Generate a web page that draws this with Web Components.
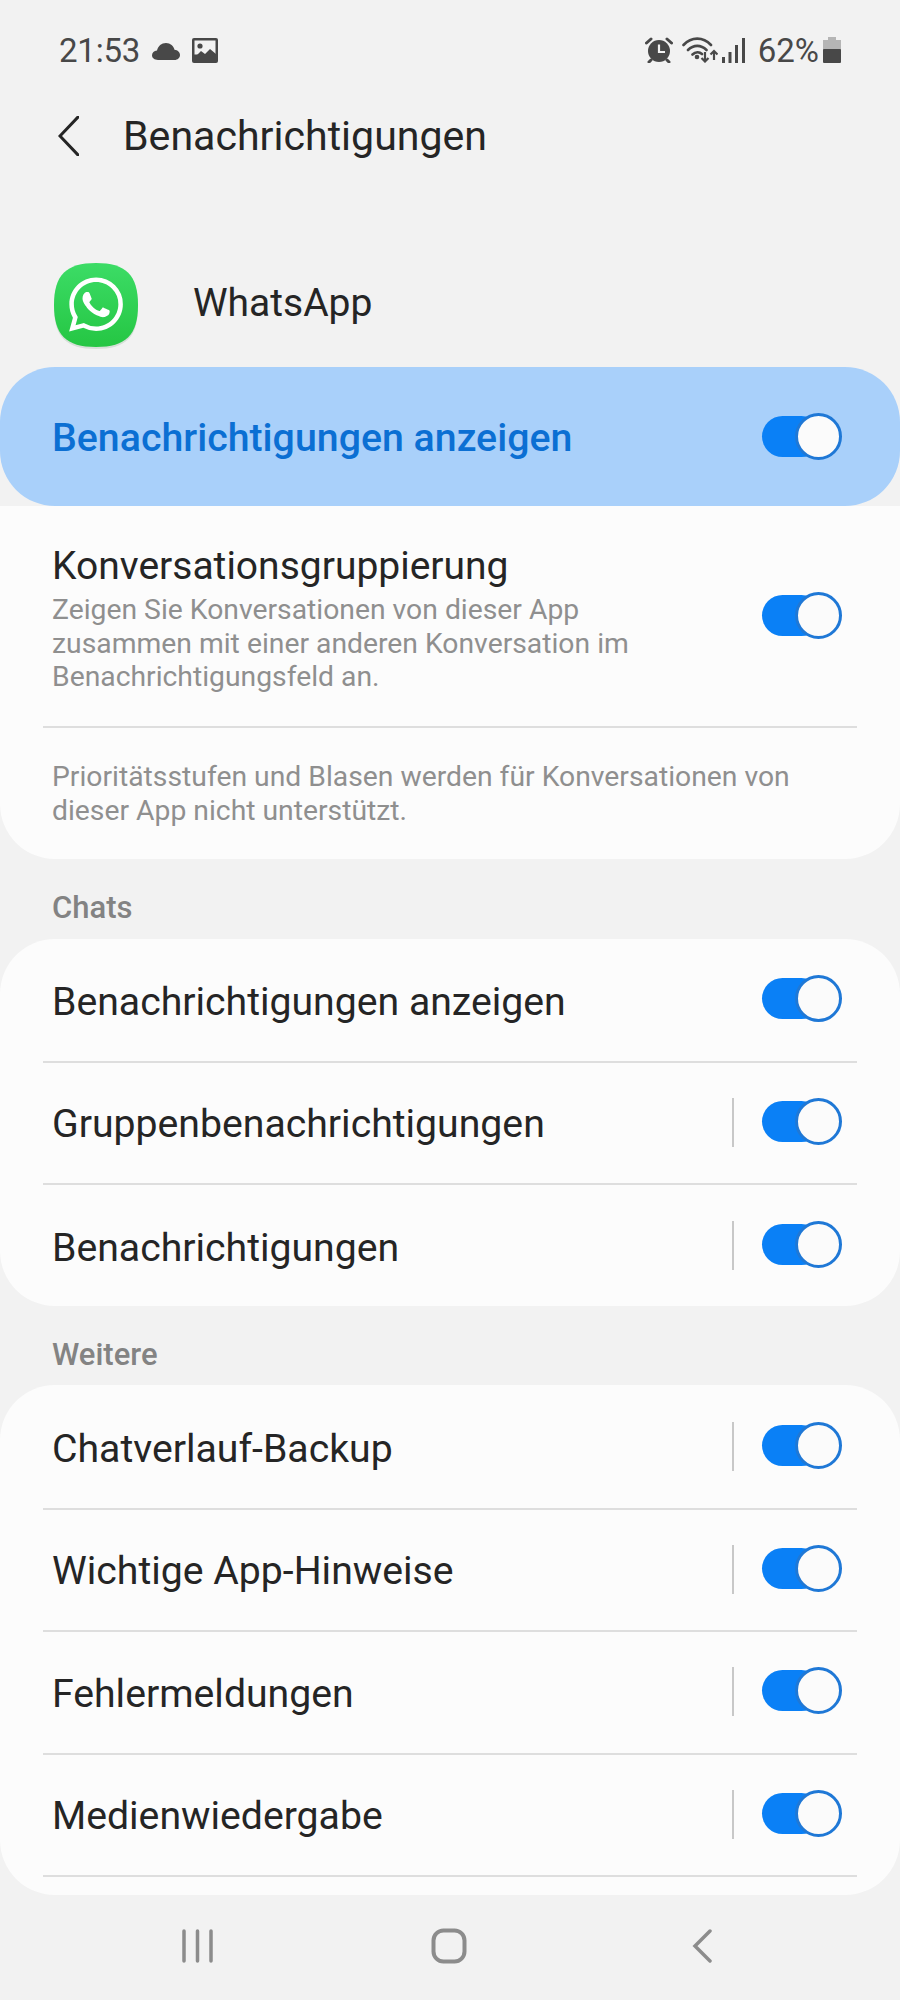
<!DOCTYPE html>
<html lang="de"><head><meta charset="utf-8"><title>Benachrichtigungen</title>
<style>
html,body{margin:0;padding:0}
body{width:900px;height:2000px;overflow:hidden;background:#f2f2f2;font-family:Roboto,"Liberation Sans",sans-serif;color:#252525;display:flex;flex-direction:column}
</style></head><body>
<status-bar></status-bar>
<app-bar>Benachrichtigungen</app-bar>
<app-head>WhatsApp</app-head>
<master-row>Benachrichtigungen anzeigen</master-row>
<set-card flat style="height:353px">
  <conv-row title="Konversationsgruppierung">Zeigen Sie Konversationen von dieser App<br>zusammen mit einer anderen Konversation im<br>Benachrichtigungsfeld an.</conv-row>
  <note-text>Prioritätsstufen und Blasen werden für Konversationen von<br>dieser App nicht unterstützt.</note-text>
</set-card>
<sec-label>Chats</sec-label>
<set-card style="height:367px;padding-top:1px">
  <set-row>Benachrichtigungen anzeigen</set-row>
  <set-row divider>Gruppenbenachrichtigungen</set-row>
  <set-row divider last>Benachrichtigungen</set-row>
</set-card>
<sec-label short>Weitere</sec-label>
<set-card style="height:510px;padding-top:2px">
  <set-row divider>Chatverlauf-Backup</set-row>
  <set-row divider>Wichtige App-Hinweise</set-row>
  <set-row divider>Fehlermeldungen</set-row>
  <set-row divider>Medienwiedergabe</set-row>
</set-card>
<nav-bar></nav-bar>
<script>
function def(name,html){
  customElements.define(name,class extends HTMLElement{
    connectedCallback(){
      if(this.shadowRoot)return;
      const r=this.attachShadow({mode:'open'});
      r.innerHTML=typeof html==='function'?html(this):html;
    }
  });
}
def('toggle-switch',`<style>
:host{display:block;position:relative;width:80px;height:47px;flex:none}
.t{position:absolute;left:0;top:3px;width:60px;height:41px;border-radius:21px;background:#0a80f6}
.k{position:absolute;right:0;top:0;width:47px;height:47px;box-sizing:border-box;border-radius:50%;background:#fbfbfb;border:3px solid #1f78d6}
</style><div class="t"></div><div class="k"></div>`);
def('status-bar',`<style>
:host{display:flex;align-items:center;height:100px;flex:none;box-sizing:border-box;padding:0 59px 0 59px;color:#484848;font-size:33px}
.time{width:93px;letter-spacing:-.2px}
svg{display:block;flex:none}
.sp{flex:1}
</style>
<span class="time">21:53</span>
<svg width="28" height="18" viewBox="0 0 28 18" style="margin-bottom:-1px"><path fill="#484848" d="M6 18C2.500 18 0 16 0 13.300c0-2.700 2-4.600 5-4.800C6 4 9.500 1 14 1c4.300 0 7.800 3 8.500 6.800 3.200.3 5.500 2.500 5.500 5.200 0 2.800-2.300 5-5.500 5z"/></svg>
<svg width="26" height="25" viewBox="0 0 26 25" style="margin-left:12px"><rect width="26" height="25" rx="2" fill="#484848"/><rect x="2.500" y="2.500" width="21" height="14" fill="#f2f2f2"/><circle cx="8" cy="8" r="2.600" fill="#484848"/><path fill="#484848" d="M2 20l7-7 4 3 5-5 6 5v8H2z"/></svg>
<span class="sp"></span>
<svg width="28" height="26" viewBox="0 0 28 26"><path stroke="#484848" stroke-width="3" stroke-linecap="round" d="M1.500 6L6 2M26.500 6L22 2M6 23l-2 2M22 23l2 2"/><circle cx="14" cy="14" r="11" fill="#484848"/><path d="M14 7.500V15h6" stroke="#f2f2f2" stroke-width="2.200" fill="none"/></svg>
<svg width="36" height="26" viewBox="0 0 36 26" style="margin-left:9px"><g fill="none" stroke="#484848" stroke-width="2.600" stroke-linecap="round"><path d="M1.500 8C9.500 -.5 21 -.5 29 8M6 13c5.500-5.500 13-5.500 18.500 0M10.500 17.500c3-2.800 7-2.800 9.500-.5"/></g><circle cx="15" cy="20" r="2.300" fill="#484848"/><path stroke="#484848" stroke-width="2.200" fill="none" d="M23 15v9M19.500 21l3.500 3.500 3.500-3.500M32 23v-9M28.500 17.500L32 14l3.500 3.500"/></svg>
<svg width="23" height="25" viewBox="0 0 23 25" style="margin-left:4px"><g fill="#484848"><rect x="0" y="19" width="3" height="6"/><rect x="6.500" y="14" width="3" height="11"/><rect x="13" y="7" width="3" height="18"/><rect x="20" y="0" width="3" height="25"/></g></svg>
<span style="margin-left:13px">62%</span>
<svg width="18" height="26" viewBox="0 0 18 26" style="margin-left:4px"><path fill="#b5b5b5" d="M5 0h8v3h5v10H0V3h5z"/><rect y="12" width="18" height="14" rx="1" fill="#484848"/></svg>`);
def('app-bar',`<style>
:host{display:flex;align-items:center;height:72px;flex:none;padding-left:58px;font-size:41.100px;color:#252525}
svg{margin-right:44px;flex:none}
</style><svg width="21" height="40" viewBox="0 0 21 40"><path d="M20 1L2 20l18 19" fill="none" stroke="#252525" stroke-width="3" stroke-linecap="round"/></svg><slot></slot>`);
def('app-head',`<style>
:host{display:flex;align-items:center;height:115px;margin-top:80px;box-sizing:border-box;padding-bottom:14px;flex:none;padding-left:54px;font-size:39px;color:#252525}
svg{margin-right:55px;margin-top:3px;margin-bottom:-3px;flex:none}
</style><svg width="84" height="86" viewBox="0 0 84 86"><defs><linearGradient id="g" x1="0" y1="0" x2="0" y2="1"><stop offset="0" stop-color="#3cdc66"/><stop offset="1" stop-color="#25c643"/></linearGradient></defs>
<path fill="#d6dfd8" d="M42 2C72 2 84 14 84 44S72 86 42 86 0 74 0 44 12 2 42 2z"/>
<path fill="url(#g)" d="M42 0C72 0 84 12 84 42S72 84 42 84 0 72 0 42 12 0 42 0z"/>
<g transform="translate(15 14.500) scale(2.250)"><path fill="#fff" d="M17.472 14.382c-.297-.149-1.758-.867-2.030-.967-.273-.099-.471-.148-.670.150-.197.297-.767.966-.940 1.164-.173.199-.347.223-.644.075-.297-.150-1.255-.463-2.390-1.475-.883-.788-1.480-1.761-1.653-2.059-.173-.297-.018-.458.130-.606.134-.133.298-.347.446-.520.149-.174.198-.298.298-.497.099-.198.050-.371-.025-.520-.075-.149-.669-1.612-.916-2.207-.242-.579-.487-.500-.669-.510-.173-.008-.371-.010-.570-.010-.198 0-.520.074-.792.372-.272.297-1.040 1.016-1.040 2.479 0 1.462 1.065 2.875 1.213 3.074.149.198 2.096 3.200 5.077 4.487.709.306 1.262.489 1.694.625.712.227 1.360.195 1.871.118.571-.085 1.758-.719 2.006-1.413.248-.694.248-1.289.173-1.413-.074-.124-.272-.198-.570-.347m-5.421 7.403h-.004a9.870 9.870 0 01-5.031-1.378l-.361-.214-3.741.982.998-3.648-.235-.374a9.860 9.860 0 01-1.510-5.260c.001-5.450 4.436-9.884 9.888-9.884 2.640 0 5.122 1.030 6.988 2.898a9.825 9.825 0 012.893 6.994c-.003 5.450-4.437 9.884-9.885 9.884m8.413-18.297A11.815 11.815 0 0012.050 0C5.495 0 .160 5.335.157 11.892c0 2.096.547 4.142 1.588 5.945L.057 24l6.305-1.654a11.882 11.882 0 005.683 1.448h.005c6.554 0 11.890-5.335 11.893-11.893a11.821 11.821 0 00-3.480-8.413z"/></g></svg><slot></slot>`);
def('master-row',`<style>
:host{display:flex;align-items:center;justify-content:space-between;height:139px;flex:none;box-sizing:border-box;padding:0 58px 0 52px;background:#a9d0fa;border-radius:55px;font-size:39.300px;font-weight:500;color:#0b6fd3;position:relative;z-index:1}
.l{padding-top:2px}
</style><span class="l"><slot></slot></span><toggle-switch></toggle-switch>`);
def('set-card',t=>`<style>
:host{display:block;flex:none;box-sizing:border-box;background:#fcfcfc;overflow:hidden;border-radius:${t.hasAttribute('flat')?'0 0 55px 55px':'55px'}}
</style><slot></slot>`);
def('conv-row',t=>`<style>
:host{display:flex;align-items:flex-start;justify-content:space-between;box-sizing:border-box;height:222px;margin:0 43px;padding:37px 15px 0 9px;border-bottom:2px solid #dedede}
.title{font-size:39px;line-height:46px;color:#252525;margin-bottom:4px}
.desc{font-size:28.300px;line-height:33.500px;color:#8f8f8f}
toggle-switch{margin-top:49px}
</style><div><div class="title">${t.getAttribute('title')}</div><div class="desc"><slot></slot></div></div><toggle-switch></toggle-switch>`);
def('note-text',`<style>
:host{display:block;padding:32px 52px 0;font-size:28.300px;line-height:33.500px;color:#8f8f8f}
</style><slot></slot>`);
def('sec-label',t=>`<style>
:host{display:flex;align-items:center;height:${t.hasAttribute('short')?79:80}px;flex:none;box-sizing:border-box;padding:${t.hasAttribute('short')?18:17}px 52px 0;font-size:31px;font-weight:500;color:#838383}
</style><slot></slot>`);
def('set-row',t=>`<style>
:host{display:flex;align-items:center;box-sizing:border-box;height:122.500px;margin:0 43px;padding:0 15px 0 9px;font-size:39.200px;color:#252525;${t.hasAttribute('last')?'':'border-bottom:2px solid #dedede'}}
.txt{flex:1;padding-top:3px}
.d{width:2px;height:49px;background:#c8c8c8;margin-right:28px;margin-top:-1px}
toggle-switch{margin-top:-3px}
</style><span class="txt"><slot></slot></span>${t.hasAttribute('divider')?'<span class="d"></span>':''}<toggle-switch></toggle-switch>`);
def('nav-bar',`<style>
:host{display:flex;flex:none;height:104px;align-items:center;box-sizing:border-box;padding:0 0 3px 182px}
svg{display:block;flex:none}
</style>
<svg width="32" height="34" viewBox="0 0 32 34"><path d="M2 2v30M15.500 2v30M29 2v30" stroke="#8c8c8c" stroke-width="3.500" stroke-linecap="round"/></svg>
<svg width="36" height="36" viewBox="0 0 36 36" style="margin-left:217px"><rect x="2.500" y="2.500" width="31" height="31" rx="10" fill="none" stroke="#8c8c8c" stroke-width="4"/></svg>
<svg width="20" height="34" viewBox="0 0 20 34" style="margin-left:225px"><path d="M18 2L3 17l15 15" fill="none" stroke="#8c8c8c" stroke-width="3.500" stroke-linecap="round"/></svg>`);
</script>
</body></html>
